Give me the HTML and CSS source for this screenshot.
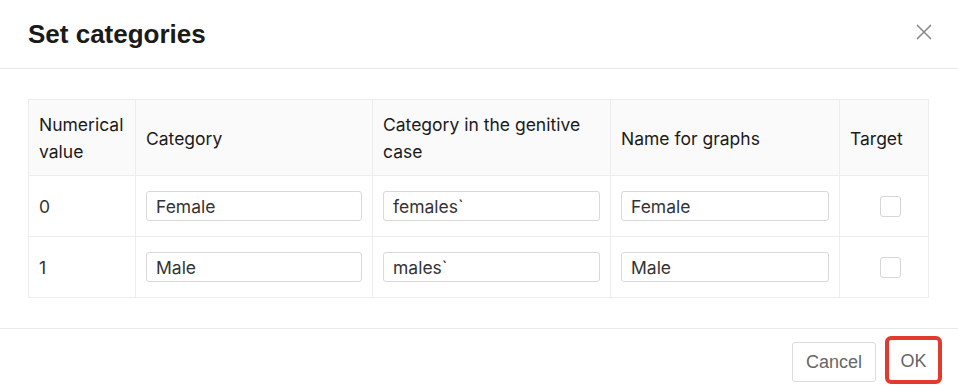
FILE: index.html
```html
<!DOCTYPE html>
<html lang="en">

<head>
  <meta charset="UTF-8">
  <meta name="viewport" content="width=device-width, initial-scale=1.0">
  <title>Set categories</title>
  <link rel="stylesheet" href="styles.css">
</head>

<body>
  <div class="modal">
    <div class="modal-header">
      <h2 class="modal-title">Set categories</h2>
      <button class="close-btn" aria-label="Close">
        <svg width="16" height="16" viewBox="0 0 16 16">
          <path d="M1 1 L15 15 M15 1 L1 15" stroke="#8a8a8a" stroke-width="1.6" fill="none" />
        </svg>
      </button>
    </div>

    <div class="modal-body">
      <table class="categories">
        <colgroup>
          <col style="width: 107px">
          <col style="width: 237px">
          <col style="width: 238px">
          <col style="width: 229px">
          <col style="width: 89px">
        </colgroup>
        <thead>
          <tr>
            <th>Numerical value</th>
            <th>Category</th>
            <th>Category in the genitive case</th>
            <th>Name for graphs</th>
            <th>Target</th>
          </tr>
        </thead>
        <tbody>
          <tr>
            <td>0</td>
            <td><input type="text" value="Female"></td>
            <td><input type="text" value="females`"></td>
            <td><input type="text" value="Female"></td>
            <td class="target"><span class="checkbox"></span></td>
          </tr>
          <tr>
            <td>1</td>
            <td><input type="text" value="Male"></td>
            <td><input type="text" value="males`"></td>
            <td><input type="text" value="Male"></td>
            <td class="target"><span class="checkbox"></span></td>
          </tr>
        </tbody>
      </table>
    </div>

    <div class="modal-footer">
      <button class="btn">Cancel</button>
      <button class="btn btn-ok">OK</button>
    </div>
  </div>
</body>

</html>
```

FILE: styles.css
```css
body {
  margin: 0;
  padding: 0;
  background: #fff;
  font-family: 'Inter', 'Noto Sans', sans-serif;
}

.modal {
  width: 958px;
  height: 392px;
  background: #fff;
}

.modal-header {
  height: 68px;
  padding: 0 26px 0 28px;
  display: flex;
  align-items: center;
  justify-content: space-between;
  border-bottom: 1px solid #e9e9e9;
}

.modal-title {
  margin: 0;
  font-family: 'Liberation Sans', Arial, sans-serif;
  font-size: 26px;
  font-weight: bold;
  color: #1a1a1a;
}

.close-btn {
  border: none;
  background: none;
  padding: 0;
  width: 16px;
  height: 16px;
  margin-top: -4px;
}

.close-btn svg {
  display: block;
}

.modal-body {
  padding: 30px 28px 30px 28px;
}

.categories {
  width: 900px;
  table-layout: fixed;
  border-collapse: collapse;
  font-size: 17.5px;
}

.categories th,
.categories td {
  border: 1px solid #ededed;
  text-align: left;
  vertical-align: middle;
}

.categories th {
  background: #fafafa;
  font-weight: normal;
  color: #1a1a1a;
  line-height: 27px;
  padding: 11px 10px 10px 10px;
  height: 54px;
}

.categories td {
  color: #333;
  padding: 15px 10px 15px 10px;
  height: 30px;
}

.categories input {
  display: block;
  width: 100%;
  height: 30px;
  box-sizing: border-box;
  border: 1px solid #d9d9d9;
  border-radius: 3px;
  padding: 0 9px;
  font-family: 'Inter', 'Noto Sans', sans-serif;
  font-size: 17.5px;
  color: #333;
  background: #fff;
}

.categories .target {
  padding-left: 40px;
}

.checkbox {
  display: block;
  width: 19px;
  height: 19px;
  border: 1px solid #d6d6d6;
  border-radius: 3px;
  background: #fff;
}

.modal-footer {
  height: 63px;
  border-top: 1px solid #e9e9e9;
  display: flex;
  align-items: center;
  justify-content: flex-end;
  padding: 0 16px;
  gap: 9px;
}

.btn {
  height: 40px;
  padding: 1px 13px 0 13px;
  border: 1px solid #dcdcdc;
  border-radius: 3px;
  background: #fff;
  font-family: 'Liberation Sans', Arial, sans-serif;
  font-size: 18px;
  color: #666;
  margin-top: 2px;
}

.btn-ok {
  height: 48px;
  width: 57px;
  padding: 4px 0 0 0;
  border: 4px solid #e23a2e;
  border-radius: 6px;
  margin-top: -2px;
}
```
